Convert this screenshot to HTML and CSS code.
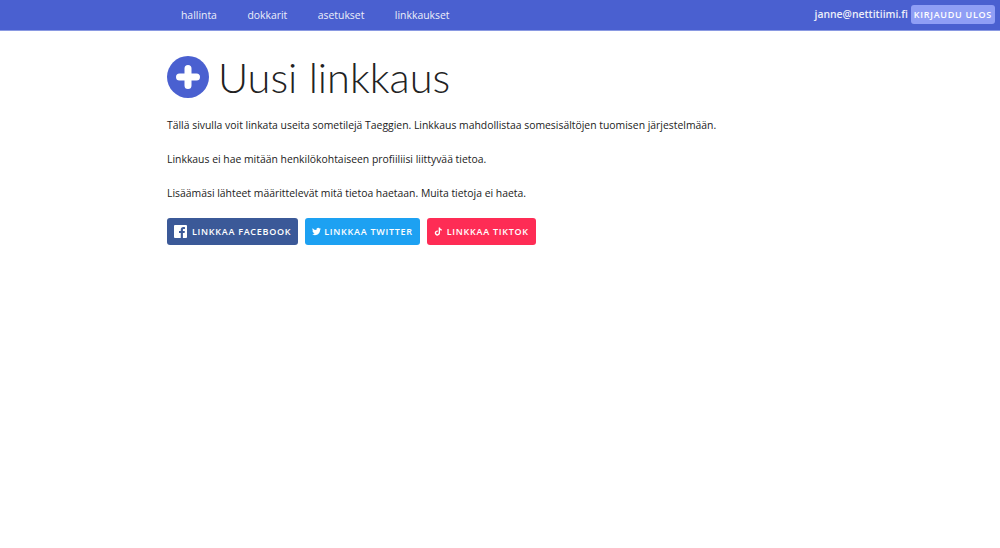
FILE: index.html
```html
<!DOCTYPE html>
<html lang="fi">
<head>
  <meta charset="UTF-8" />
  <meta name="viewport" content="width=device-width, initial-scale=1" />
  <title>Uusi linkkaus</title>
  <link rel="stylesheet" href="styles.css">
</head>
<body>
  <nav class="topbar">
    <ul class="nav-links">
      <li><a href="#">hallinta</a></li>
      <li><a href="#">dokkarit</a></li>
      <li><a href="#">asetukset</a></li>
      <li><a href="#">linkkaukset</a></li>
    </ul>
    <div class="nav-user">
      <span class="user-email">janne@nettitiimi.fi</span>
      <a href="#" class="logout-btn">Kirjaudu ulos</a>
    </div>
  </nav>
  <main class="content">
    <h1 class="page-title">
      <svg class="title-icon" viewBox="0 0 42 42" aria-hidden="true">
        <circle cx="21" cy="21" r="21" fill="#4a60d0" />
        <path d="M21 12.500v17M12.500 21h17" stroke="#fff" stroke-width="7" stroke-linecap="round" />
      </svg>
      Uusi linkkaus
    </h1>
    <p>Tällä sivulla voit linkata useita sometilejä Taeggien. Linkkaus mahdollistaa somesisältöjen tuomisen järjestelmään.</p>
    <p>Linkkaus ei hae mitään henkilökohtaiseen profiiliisi liittyvää tietoa.</p>
    <p>Lisäämäsi lähteet määrittelevät mitä tietoa haetaan. Muita tietoja ei haeta.</p>
    <div class="link-buttons">
      <a href="#" class="link-btn btn-facebook">
        <svg class="btn-icon icon-facebook" viewBox="0 0 14 14" aria-hidden="true">
          <path fill="#fff" d="M1 0h12a1 1 0 0 1 1 1v12a1 1 0 0 1-1 1H9.600V8.600h1.800l.3-2.100H9.600V5.200c0-.6.2-1 1-1h1.200V2.300c-.2 0-.9-.1-1.700-.1-1.700 0-2.800 1-2.800 2.900v1.400H5.400v2.100h1.900V14H1a1 1 0 0 1-1-1V1a1 1 0 0 1 1-1z" />
        </svg>
        Linkkaa Facebook
      </a>
      <a href="#" class="link-btn btn-twitter">
        <svg class="btn-icon icon-twitter" viewBox="0 0 24 24" aria-hidden="true">
          <path fill="#fff" d="M23.950 4.570a10 10 0 0 1-2.820.77 4.960 4.960 0 0 0 2.160-2.720 9.900 9.900 0 0 1-3.120 1.190 4.920 4.920 0 0 0-8.380 4.480A13.980 13.980 0 0 1 1.640 3.160a4.820 4.820 0 0 0-.67 2.480c0 1.710.87 3.210 2.190 4.100a4.900 4.900 0 0 1-2.230-.62v.06a4.920 4.920 0 0 0 3.950 4.830 5 5 0 0 1-2.210.08 4.940 4.940 0 0 0 4.600 3.420A9.870 9.870 0 0 1 0 19.540a14 14 0 0 0 7.560 2.210c9.050 0 14-7.500 14-13.980 0-.21 0-.42-.02-.63a9.940 9.940 0 0 0 2.410-2.570z" />
        </svg>
        Linkkaa Twitter
      </a>
      <a href="#" class="link-btn btn-tiktok">
        <svg class="btn-icon icon-tiktok" viewBox="0 0 24 24" aria-hidden="true">
          <path fill="#fff" d="M12.500 1h3.600c.3 2.900 2 4.700 4.900 4.900v3.700c-1.800 0-3.400-.6-4.900-1.600v7.500c0 4.700-3.300 7.500-7 7.500-4 0-7.100-3.200-7.100-7 0-4.300 3.600-7.500 8.200-6.900v3.800c-2.400-.5-4.400 1-4.400 3.100 0 1.800 1.500 3.200 3.200 3.200 1.800 0 3.500-1.200 3.500-3.700z" />
        </svg>
        Linkkaa TikTok
      </a>
    </div>
  </main>
</body>
</html>
```

FILE: styles.css
```css
:root {
  --primary: #4a60d0;
  --text-color: #222;
}

* {
  box-sizing: border-box;
}

body {
  margin: 0;
  font-family: "Open Sans", sans-serif;
  font-size: 10.4px;
  line-height: 18px;
  color: var(--text-color);
  background: #fff;
}

a {
  text-decoration: none;
}

.topbar {
  display: flex;
  justify-content: space-between;
  align-items: center;
  height: 31px;
  padding: 0 5px 1px 165px;
  background: var(--primary);
  border-bottom: 1px solid #8a99e2;
}

.nav-links {
  display: flex;
  gap: 30.5px;
  margin: 0;
  padding: 0 0 0 16px;
  list-style: none;
}

.nav-links a {
  color: #fff;
  font-size: 10.4px;
  font-weight: 500;
  opacity: 0.9;
}

.nav-user {
  display: flex;
  align-items: center;
  gap: 3px;
}

.user-email {
  color: #fff;
  font-size: 10.4px;
  font-weight: 600;
  opacity: 0.9;
  position: relative;
  top: -1px;
}

.logout-btn {
  padding: 0.5px 3px;
  border-radius: 3px;
  background: #8f9ef5;
  color: #fff;
  font-size: 9px;
  font-weight: 600;
  letter-spacing: 0.08em;
  text-transform: uppercase;
}

.content {
  padding: 25px 167px 0;
}

.page-title {
  display: flex;
  align-items: center;
  gap: 9px;
  margin: 0 0 18px;
  font-family: Lato, sans-serif;
  font-size: 41.6px;
  font-weight: 300;
  line-height: 42px;
}

.title-icon {
  width: 42px;
  height: 42px;
}

.content p {
  margin: 0 0 16px;
}

.link-buttons {
  display: flex;
  gap: 7px;
  margin-top: 16px;
}

.link-btn {
  display: flex;
  align-items: center;
  gap: 5px;
  height: 27px;
  padding: 0 7px;
  border-radius: 3px;
  color: #fff;
  font-size: 9px;
  font-weight: 600;
  letter-spacing: 0.08em;
  text-transform: uppercase;
}

.btn-icon {
  display: block;
}

.icon-facebook {
  width: 13px;
  height: 13px;
}

.icon-twitter {
  width: 9px;
  height: 9px;
  margin-right: -2px;
}

.icon-tiktok {
  width: 9px;
  height: 9px;
  margin-right: -1px;
}

.btn-facebook {
  background: #3b5998;
}

.btn-twitter {
  background: #1da1f2;
}

.btn-tiktok {
  background: #fe2c55;
}
```
